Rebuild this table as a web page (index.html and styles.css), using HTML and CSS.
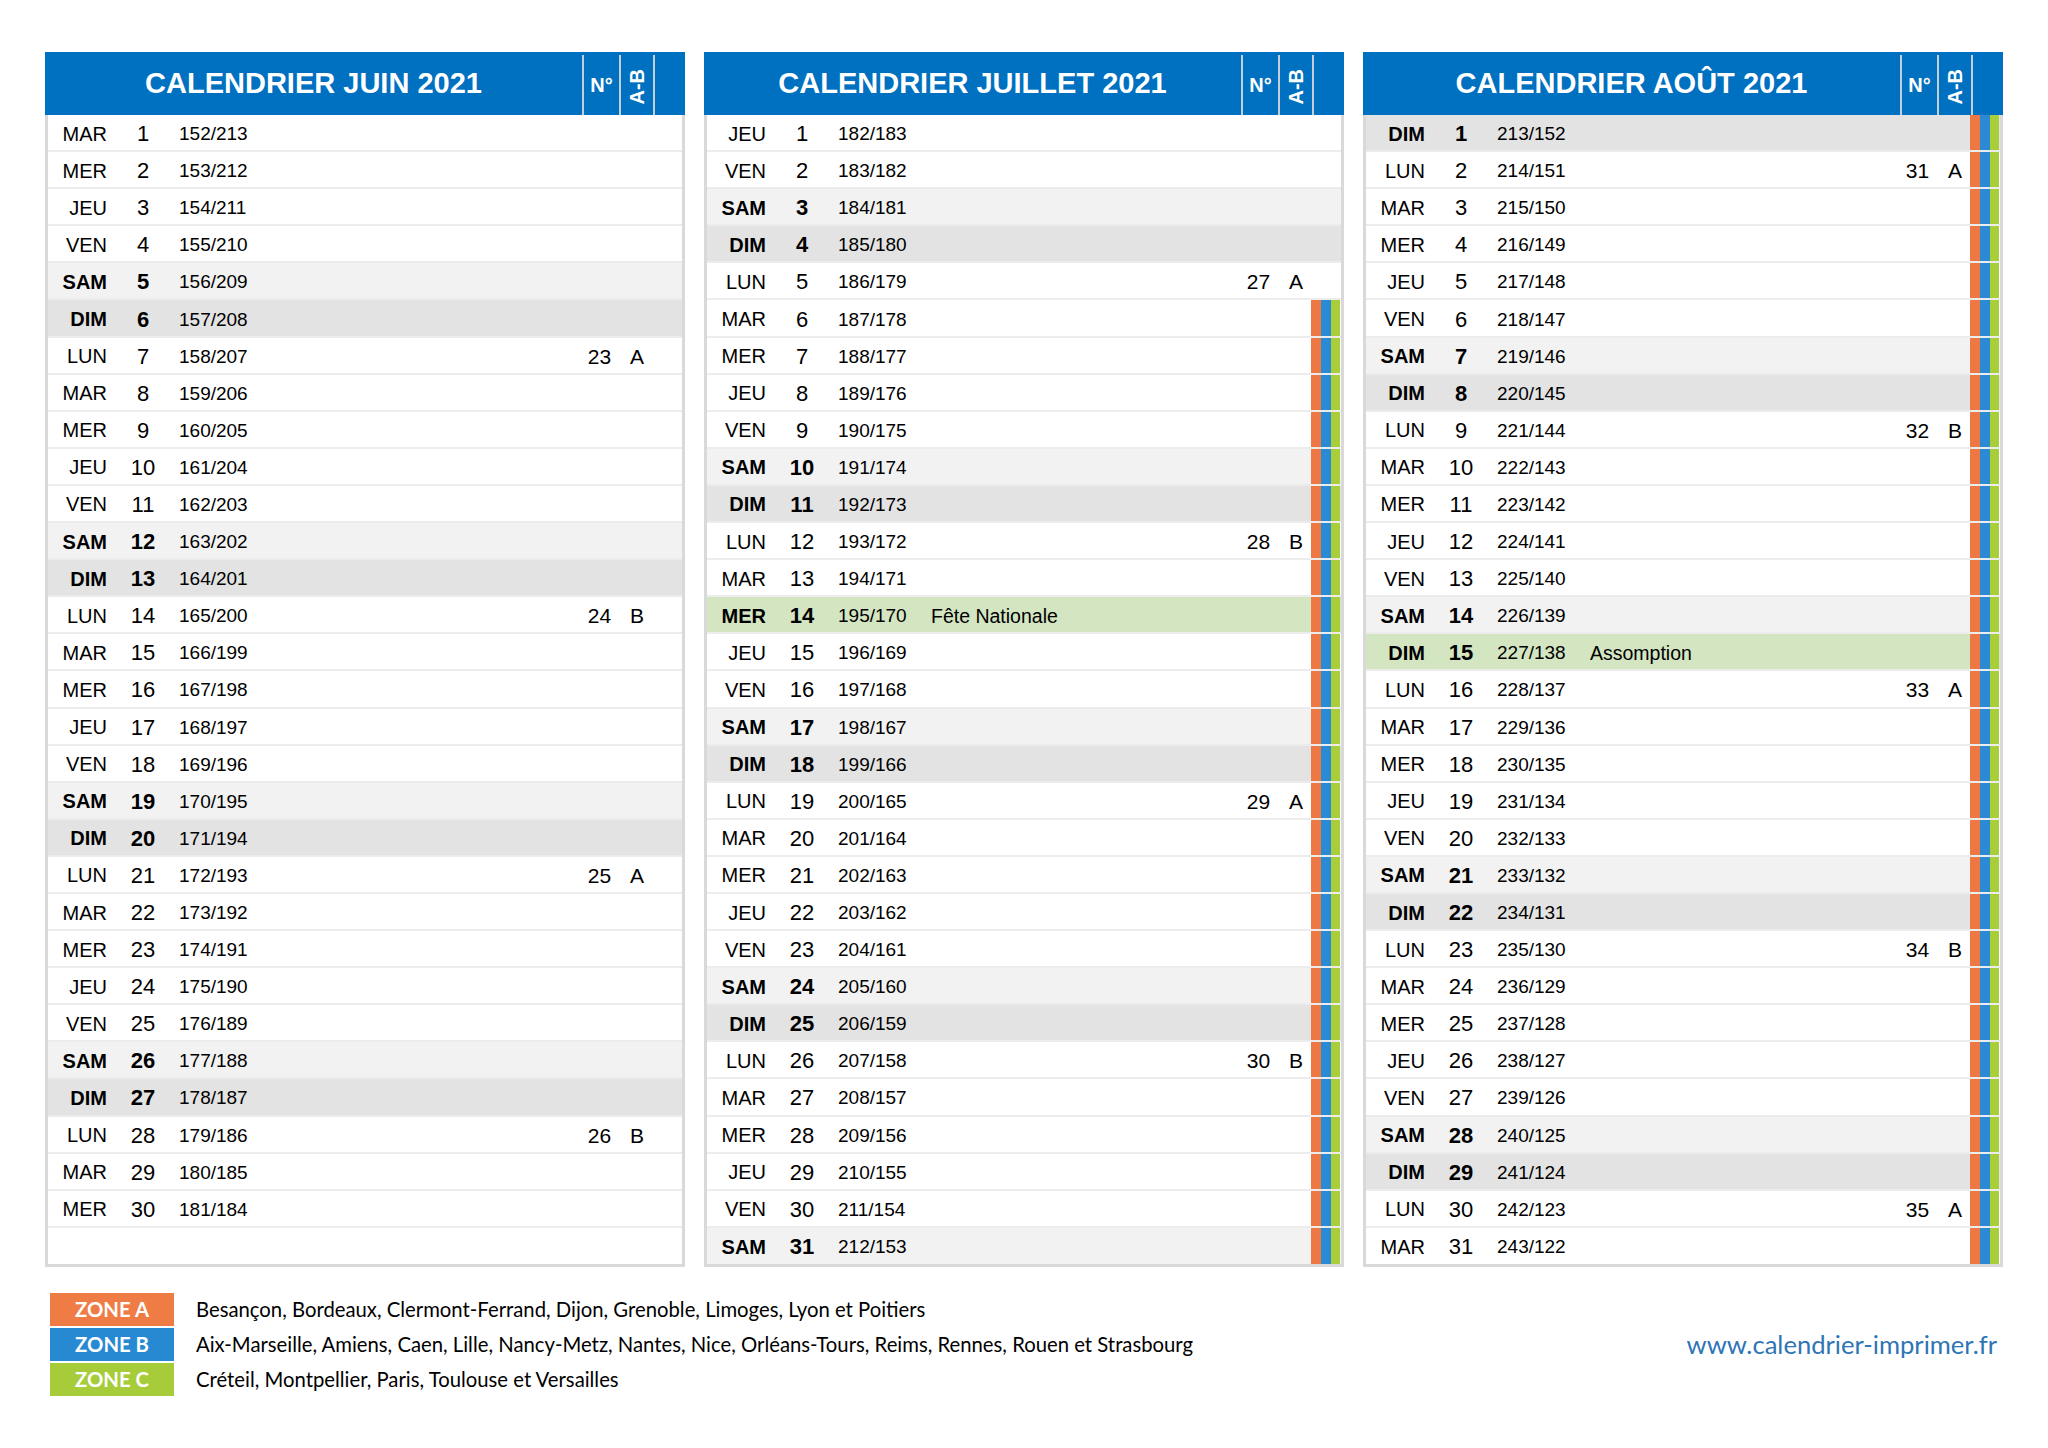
FILE: index.html
```html
<!DOCTYPE html>
<html lang="fr">
<head>
<meta charset="utf-8">
<title>Calendrier juin juillet août 2021</title>
<link rel="stylesheet" href="styles.css">
</head>
<body>
<div class="page">
<div class="cals">

<section class="cal">
<div class="hd"><div class="t">CALENDRIER JUIN 2021</div><div class="c">N°</div><div class="c"><span class="v">A-B</span></div><div class="c"></div></div>
<div class="bd">
<div class="r"><span>MAR</span><span>1</span><span>152/213</span></div>
<div class="r"><span>MER</span><span>2</span><span>153/212</span></div>
<div class="r"><span>JEU</span><span>3</span><span>154/211</span></div>
<div class="r"><span>VEN</span><span>4</span><span>155/210</span></div>
<div class="r sa"><span>SAM</span><span>5</span><span>156/209</span></div>
<div class="r di"><span>DIM</span><span>6</span><span>157/208</span></div>
<div class="r"><span>LUN</span><span>7</span><span>158/207</span><span class="wk">23</span><span class="ab">A</span></div>
<div class="r"><span>MAR</span><span>8</span><span>159/206</span></div>
<div class="r"><span>MER</span><span>9</span><span>160/205</span></div>
<div class="r"><span>JEU</span><span>10</span><span>161/204</span></div>
<div class="r"><span>VEN</span><span>11</span><span>162/203</span></div>
<div class="r sa"><span>SAM</span><span>12</span><span>163/202</span></div>
<div class="r di"><span>DIM</span><span>13</span><span>164/201</span></div>
<div class="r"><span>LUN</span><span>14</span><span>165/200</span><span class="wk">24</span><span class="ab">B</span></div>
<div class="r"><span>MAR</span><span>15</span><span>166/199</span></div>
<div class="r"><span>MER</span><span>16</span><span>167/198</span></div>
<div class="r"><span>JEU</span><span>17</span><span>168/197</span></div>
<div class="r"><span>VEN</span><span>18</span><span>169/196</span></div>
<div class="r sa"><span>SAM</span><span>19</span><span>170/195</span></div>
<div class="r di"><span>DIM</span><span>20</span><span>171/194</span></div>
<div class="r"><span>LUN</span><span>21</span><span>172/193</span><span class="wk">25</span><span class="ab">A</span></div>
<div class="r"><span>MAR</span><span>22</span><span>173/192</span></div>
<div class="r"><span>MER</span><span>23</span><span>174/191</span></div>
<div class="r"><span>JEU</span><span>24</span><span>175/190</span></div>
<div class="r"><span>VEN</span><span>25</span><span>176/189</span></div>
<div class="r sa"><span>SAM</span><span>26</span><span>177/188</span></div>
<div class="r di"><span>DIM</span><span>27</span><span>178/187</span></div>
<div class="r"><span>LUN</span><span>28</span><span>179/186</span><span class="wk">26</span><span class="ab">B</span></div>
<div class="r"><span>MAR</span><span>29</span><span>180/185</span></div>
<div class="r"><span>MER</span><span>30</span><span>181/184</span></div>
<div class="r last"></div>
</div>
</section>

<section class="cal">
<div class="hd"><div class="t">CALENDRIER JUILLET 2021</div><div class="c">N°</div><div class="c"><span class="v">A-B</span></div><div class="c"></div></div>
<div class="bd">
<div class="r"><span>JEU</span><span>1</span><span>182/183</span></div>
<div class="r"><span>VEN</span><span>2</span><span>183/182</span></div>
<div class="r sa"><span>SAM</span><span>3</span><span>184/181</span></div>
<div class="r di"><span>DIM</span><span>4</span><span>185/180</span></div>
<div class="r"><span>LUN</span><span>5</span><span>186/179</span><span class="wk">27</span><span class="ab">A</span></div>
<div class="r zv"><span>MAR</span><span>6</span><span>187/178</span></div>
<div class="r zv"><span>MER</span><span>7</span><span>188/177</span></div>
<div class="r zv"><span>JEU</span><span>8</span><span>189/176</span></div>
<div class="r zv"><span>VEN</span><span>9</span><span>190/175</span></div>
<div class="r sa zv"><span>SAM</span><span>10</span><span>191/174</span></div>
<div class="r di zv"><span>DIM</span><span>11</span><span>192/173</span></div>
<div class="r zv"><span>LUN</span><span>12</span><span>193/172</span><span class="wk">28</span><span class="ab">B</span></div>
<div class="r zv"><span>MAR</span><span>13</span><span>194/171</span></div>
<div class="r fe zv"><span>MER</span><span>14</span><span>195/170</span><span class="ev">Fête Nationale</span></div>
<div class="r zv"><span>JEU</span><span>15</span><span>196/169</span></div>
<div class="r zv"><span>VEN</span><span>16</span><span>197/168</span></div>
<div class="r sa zv"><span>SAM</span><span>17</span><span>198/167</span></div>
<div class="r di zv"><span>DIM</span><span>18</span><span>199/166</span></div>
<div class="r zv"><span>LUN</span><span>19</span><span>200/165</span><span class="wk">29</span><span class="ab">A</span></div>
<div class="r zv"><span>MAR</span><span>20</span><span>201/164</span></div>
<div class="r zv"><span>MER</span><span>21</span><span>202/163</span></div>
<div class="r zv"><span>JEU</span><span>22</span><span>203/162</span></div>
<div class="r zv"><span>VEN</span><span>23</span><span>204/161</span></div>
<div class="r sa zv"><span>SAM</span><span>24</span><span>205/160</span></div>
<div class="r di zv"><span>DIM</span><span>25</span><span>206/159</span></div>
<div class="r zv"><span>LUN</span><span>26</span><span>207/158</span><span class="wk">30</span><span class="ab">B</span></div>
<div class="r zv"><span>MAR</span><span>27</span><span>208/157</span></div>
<div class="r zv"><span>MER</span><span>28</span><span>209/156</span></div>
<div class="r zv"><span>JEU</span><span>29</span><span>210/155</span></div>
<div class="r zv"><span>VEN</span><span>30</span><span>211/154</span></div>
<div class="r sa zv last"><span>SAM</span><span>31</span><span>212/153</span></div>
</div>
</section>

<section class="cal">
<div class="hd"><div class="t">CALENDRIER AOÛT 2021</div><div class="c">N°</div><div class="c"><span class="v">A-B</span></div><div class="c"></div></div>
<div class="bd">
<div class="r di zv"><span>DIM</span><span>1</span><span>213/152</span></div>
<div class="r zv"><span>LUN</span><span>2</span><span>214/151</span><span class="wk">31</span><span class="ab">A</span></div>
<div class="r zv"><span>MAR</span><span>3</span><span>215/150</span></div>
<div class="r zv"><span>MER</span><span>4</span><span>216/149</span></div>
<div class="r zv"><span>JEU</span><span>5</span><span>217/148</span></div>
<div class="r zv"><span>VEN</span><span>6</span><span>218/147</span></div>
<div class="r sa zv"><span>SAM</span><span>7</span><span>219/146</span></div>
<div class="r di zv"><span>DIM</span><span>8</span><span>220/145</span></div>
<div class="r zv"><span>LUN</span><span>9</span><span>221/144</span><span class="wk">32</span><span class="ab">B</span></div>
<div class="r zv"><span>MAR</span><span>10</span><span>222/143</span></div>
<div class="r zv"><span>MER</span><span>11</span><span>223/142</span></div>
<div class="r zv"><span>JEU</span><span>12</span><span>224/141</span></div>
<div class="r zv"><span>VEN</span><span>13</span><span>225/140</span></div>
<div class="r sa zv"><span>SAM</span><span>14</span><span>226/139</span></div>
<div class="r fe zv"><span>DIM</span><span>15</span><span>227/138</span><span class="ev">Assomption</span></div>
<div class="r zv"><span>LUN</span><span>16</span><span>228/137</span><span class="wk">33</span><span class="ab">A</span></div>
<div class="r zv"><span>MAR</span><span>17</span><span>229/136</span></div>
<div class="r zv"><span>MER</span><span>18</span><span>230/135</span></div>
<div class="r zv"><span>JEU</span><span>19</span><span>231/134</span></div>
<div class="r zv"><span>VEN</span><span>20</span><span>232/133</span></div>
<div class="r sa zv"><span>SAM</span><span>21</span><span>233/132</span></div>
<div class="r di zv"><span>DIM</span><span>22</span><span>234/131</span></div>
<div class="r zv"><span>LUN</span><span>23</span><span>235/130</span><span class="wk">34</span><span class="ab">B</span></div>
<div class="r zv"><span>MAR</span><span>24</span><span>236/129</span></div>
<div class="r zv"><span>MER</span><span>25</span><span>237/128</span></div>
<div class="r zv"><span>JEU</span><span>26</span><span>238/127</span></div>
<div class="r zv"><span>VEN</span><span>27</span><span>239/126</span></div>
<div class="r sa zv"><span>SAM</span><span>28</span><span>240/125</span></div>
<div class="r di zv"><span>DIM</span><span>29</span><span>241/124</span></div>
<div class="r zv"><span>LUN</span><span>30</span><span>242/123</span><span class="wk">35</span><span class="ab">A</span></div>
<div class="r zv last"><span>MAR</span><span>31</span><span>243/122</span></div>
</div>
</section>

</div>

<footer class="foot">
<div class="legend">
<div class="lg"><span class="zone za">ZONE A</span><span class="cities">Besançon, Bordeaux, Clermont-Ferrand, Dijon, Grenoble, Limoges, Lyon et Poitiers</span></div>
<div class="lg"><span class="zone zb">ZONE B</span><span class="cities">Aix-Marseille, Amiens, Caen, Lille, Nancy-Metz, Nantes, Nice, Orléans-Tours, Reims, Rennes, Rouen et Strasbourg</span></div>
<div class="lg"><span class="zone zc">ZONE C</span><span class="cities">Créteil, Montpellier, Paris, Toulouse et Versailles</span></div>
</div>
<div class="url">www.calendrier-imprimer.fr</div>
</footer>
</div>
</body>
</html>
```

FILE: styles.css
```css
html, body {
  margin: 0;
  padding: 0;
  background: #ffffff;
}

.page {
  padding: 52px 0 0 45px;
  width: 1958px;
  font-family: "Liberation Sans", Arial, sans-serif;
  color: #000;
}

.cals {
  display: flex;
  gap: 19px;
}

.cal {
  width: 640px;
}

.hd {
  display: grid;
  grid-template-columns: 537px 37px 34px 32px;
  height: 63px;
  background: #0070c0;
  color: #fff;
}

.hd .t {
  align-self: center;
  text-align: center;
  font-size: 29px;
  font-weight: 700;
  padding-bottom: 1px;
}

.hd .c {
  margin-top: 3px;
  border-left: 2px solid #c5cfd9;
  display: flex;
  align-items: center;
  justify-content: center;
  font-size: 20px;
  font-weight: 700;
}

.hd .v {
  writing-mode: vertical-rl;
  transform: rotate(180deg);
  font-size: 20px;
  font-weight: 700;
  padding-bottom: 4px;
}

.bd {
  border: 3px solid #d9d9d9;
  border-top: 0;
}

.r {
  display: grid;
  grid-template-columns: 59px 72px 93px 1fr 37px 34px 30px;
  align-items: center;
  height: 37.1px;
  box-sizing: border-box;
  padding-top: 3px;
  border-bottom: 2px solid #ececec;
  background: #fff;
}

.r.last {
  border-bottom: 0;
  height: 36px;
}

.r > span:nth-child(1) {
  text-align: right;
  font-size: 20px;
}

.r > span:nth-child(2) {
  text-align: center;
  font-size: 22px;
}

.r > span:nth-child(3) {
  font-size: 19px;
}

.r .ev {
  grid-column: 4;
  font-size: 19.5px;
}

.r .wk {
  grid-column: 5;
  text-align: center;
  font-size: 21px;
}

.r .ab {
  grid-column: 6;
  text-align: center;
  font-size: 21px;
  padding-left: 4px;
}

.r.sa {
  background: #f2f2f2;
}

.r.di {
  background: #e3e3e3;
}

.r.fe {
  background: #d3e5c1;
}

.r.sa > span:nth-child(-n+2),
.r.di > span:nth-child(-n+2),
.r.fe > span:nth-child(-n+2) {
  font-weight: 700;
}

.r.zv::after {
  content: "";
  grid-column: 7;
  grid-row: 1;
  align-self: stretch;
  margin-top: -3px;
  margin-right: 1px;
  background: linear-gradient(to right,
    #ee7843 0, #ee7843 10px,
    #2a8bd4 10px, #2a8bd4 20px,
    #a8cf3a 20px, #a8cf3a 100%);
}

.foot {
  margin-top: 26px;
  padding-left: 5px;
  display: flex;
  justify-content: space-between;
  align-items: center;
}

.legend {
  display: flex;
  flex-direction: column;
  gap: 2px;
}

.lg {
  display: flex;
  align-items: center;
  gap: 22px;
  font-family: Lato, "Liberation Sans", sans-serif;
}

.zone {
  width: 124px;
  height: 33px;
  display: flex;
  align-items: center;
  justify-content: center;
  color: #fff;
  font-weight: 700;
  font-size: 20.3px;
}

.za { background: #ef7b45; }
.zb { background: #2889d3; }
.zc { background: #a6cd39; }

.cities {
  font-size: 20.3px;
  color: #000;
}

.url {
  font-family: Lato, "Liberation Sans", sans-serif;
  font-size: 25.6px;
  color: #2e75b6;
  margin-right: 6px;
}
```
